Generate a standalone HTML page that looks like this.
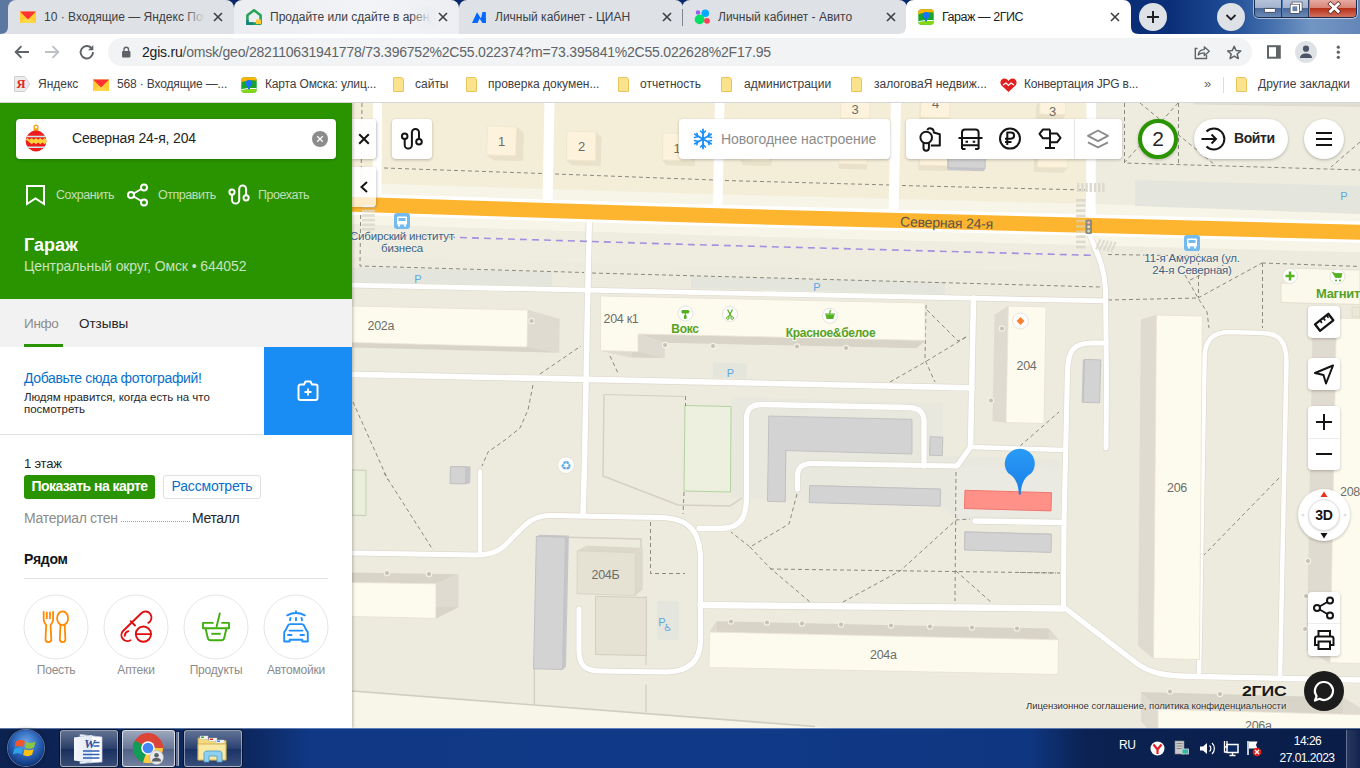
<!DOCTYPE html>
<html lang="ru">
<head>
<meta charset="utf-8">
<title>Гараж — 2ГИС</title>
<style>
*{box-sizing:border-box;margin:0;padding:0}
html,body{width:1360px;height:768px;overflow:hidden;background:#fff;font-family:"Liberation Sans",sans-serif;}
.abs{position:absolute}
#root{position:relative;width:1360px;height:768px;overflow:hidden}
/* ---------- chrome frame ---------- */
#frame{left:0;top:0;width:1360px;height:34px;background:linear-gradient(90deg,#5c78a0 0,#5c78a0 60px,#0a2766 230px,#08296c 900px,#0a2f78 1170px,#1d4b94 1225px,#3c68a8 1262px,#7296c4 1312px,#6586b8 1360px)}
.tab{top:0;height:34px;background:#dee1e6;border-radius:8px 8px 0 0;font-size:12px;color:#3c4043;white-space:nowrap;overflow:hidden}
.tab .t{position:absolute;left:36px;top:10px;width:164px;overflow:hidden;white-space:nowrap;line-height:15px}
.tab .x{position:absolute;right:8px;top:9px;width:16px;height:16px}
.tab .fav{position:absolute;left:12px;top:9px;width:16px;height:16px}
.tab.act{background:#fff}
.fade{position:absolute;top:6px;width:26px;height:22px}
#toolbar{left:0;top:34px;width:1360px;height:36px;background:#fff}
#omni{left:108px;top:38px;width:1144px;height:28px;border-radius:14px;background:#f1f3f4}
#url{left:142px;top:44px;font-size:14px;line-height:17px;color:#5f6368;white-space:nowrap;letter-spacing:-0.05px}
#url b{font-weight:normal;color:#202124}
#bm{left:0;top:70px;width:1360px;height:33px;border-bottom:1px solid #d4d6da;background:#fff;font-size:12px;color:#3c4043}
#bm span{position:absolute;top:7px;line-height:15px;white-space:nowrap}
.fold{position:absolute;top:7px;width:11px;height:15px;background:#fbe38e;border:1px solid #e9c557;border-radius:1px 3px 1px 1px}
/* ---------- left panel ---------- */
#panel{left:0;top:100px;width:352px;height:628px;background:#fff;box-shadow:1px 0 3px rgba(0,0,0,.25)}
#ghead{left:0;top:0;width:352px;height:199px;background:#299400}
#search{left:16px;top:19px;width:320px;height:40px;background:#fff;border-radius:4px;box-shadow:0 1px 3px rgba(0,0,0,.2)}
.act{color:rgba(255,255,255,.72);font-size:12.5px;line-height:16px;letter-spacing:-0.45px}
#tabs{left:0;top:199px;width:352px;height:48px;background:#f2f2f2}
.lbl{font-size:12px;line-height:14px;color:#8c8c8c;text-align:center;letter-spacing:-0.2px}
/* ---------- taskbar ---------- */
#task{left:0;top:728px;width:1360px;height:40px;background:linear-gradient(90deg,#0c2250 0,#0d2860 250px,#103884 310px,#103a88 700px,#0f3680 1030px,#0b2252 1085px,#0a1d48 1360px)}
.tbtn{position:absolute;top:2px;height:37px;border:1px solid rgba(255,255,255,.45);border-radius:3px;background:linear-gradient(180deg,rgba(255,255,255,.35),rgba(255,255,255,.12) 50%,rgba(255,255,255,.05) 51%,rgba(255,255,255,.18));box-shadow:0 0 0 1px rgba(0,0,0,.5)}
/* ---------- map ---------- */
#map{left:352px;top:100px;width:1008px;height:628px;background:#edebde;overflow:hidden}
.ctl{position:absolute;background:#fff;border-radius:4px;box-shadow:0 1px 3px rgba(0,0,0,.25)}
</style>
</head>
<body>
<div id="root">

<!-- ================= MAP ================= -->
<div id="map" class="abs">
<!--MAPSVG_START-->
<svg width="1008" height="628" viewBox="352 100 1008 628" style="position:absolute;left:0;top:0;font-family:'Liberation Sans',sans-serif">
<rect x="352" y="100" width="1008" height="628" fill="#edebde"/>
<polygon points="352.0,100.0 692.0,100.0 1090.0,100.0 1090.0,203.8 692.0,193.6 352.0,182.7" fill="#f4eed9"/>
<polygon points="352.0,182.7 692.0,193.6 1360.0,210.7 1360.0,224.7 692.0,207.6 352.0,196.7" fill="#f7f5e7"/>
<polygon points="1090.0,100.0 1360.0,100.0 1360.0,210.7 1090.0,203.8" fill="#eeecdf"/>
<polygon points="1135.0,180.0 1360.0,186.0 1360.0,214.0 1135.0,206.0" fill="#e4e5dc"/>
<polygon points="1192.0,100.0 1360.0,100.0 1360.0,107.0 1194.0,104.5" fill="#e0dcd0"/>
<polygon points="352.0,210.7 692.0,221.6 1360.0,238.7 1360.0,252.2 692.0,235.1 352.0,224.2" fill="#f7f5e7"/>
<polygon points="352.0,224.2 692.0,235.1 1090.0,245.3 1090.0,271.8 692.0,265.6 352.0,256.7" fill="#efeddf"/>
<polygon points="352.0,267.5 552.0,272.0 552.0,286.5 352.0,282.0" fill="#e4e5dc"/>
<polygon points="691.0,276.0 945.0,282.0 945.0,294.0 691.0,288.0" fill="#e4e5dc"/>
<polygon points="352.0,691.0 834.0,728.0 352.0,728.0" fill="#f8f6e8"/>
<polyline points="352.0,691.0 815.0,726.5" fill="none" stroke="#cfcdc0" stroke-width="1.6"/>
<polygon points="731.0,397.0 943.0,403.0 943.0,456.0 1059.0,459.0 1059.0,522.0 956.0,519.5 940.0,505.0 790.0,500.0 767.0,499.0 730.0,497.5" fill="#e9e8de"/>
<polygon points="956.0,466.0 1059.0,469.0 1059.0,518.0 956.0,515.0" fill="#ebeae2"/>
<polygon points="685.0,405.5 731.0,406.5 730.5,492.0 684.0,491.0" fill="#edf0df" stroke="#b3d39f" stroke-width="1"/>
<polygon points="352.0,470.0 366.0,470.3 366.0,515.6 352.0,515.3" fill="#eaeedb" stroke="#c3d0b2" stroke-width="1"/>
<polyline points="604.0,394.5 684.0,396.5" fill="none" stroke="#d3d0c2" stroke-width="1.2"/>
<polyline points="604.0,394.5 603.0,476.0 678.0,505.0 730.0,506.0 742.0,498.0" fill="none" stroke="#d3d0c2" stroke-width="1.4"/>
<polygon points="713.0,362.5 746.7,363.3 746.7,378.5 713.0,377.7" fill="#e4e5dc"/>
<polygon points="657.2,601.0 678.8,601.5 678.8,640.0 657.2,639.5" fill="#e4e5dc"/>
<polyline points="566.8,537.2 641.0,539.0 641.0,548.0" fill="none" stroke="#d3d0c2" stroke-width="1.4"/>
<polyline points="534.4,668.0 534.4,704.0" fill="none" stroke="#d3d0c2" stroke-width="1.4"/>
<polyline points="646.0,596.0 646.0,665.0" fill="none" stroke="#d3d0c2" stroke-width="1.2"/>
<polyline points="646.0,684.5 646.0,712.0" fill="none" stroke="#d3d0c2" stroke-width="1.4"/>
<polyline points="362.0,103.0 360.0,266.0 584.0,272.5" fill="none" stroke="#8b8a7f" stroke-width="1" stroke-dasharray="4 3"/>
<polyline points="384.0,168.0 543.0,173.5" fill="none" stroke="#8b8a7f" stroke-width="1" stroke-dasharray="4 3"/>
<polyline points="555.0,174.0 714.0,180.0" fill="none" stroke="#8b8a7f" stroke-width="1" stroke-dasharray="4 3"/>
<polyline points="725.0,180.5 890.0,185.0" fill="none" stroke="#8b8a7f" stroke-width="1" stroke-dasharray="4 3"/>
<polyline points="902.0,185.5 1085.0,190.0" fill="none" stroke="#8b8a7f" stroke-width="1" stroke-dasharray="4 3"/>
<polyline points="592.0,273.0 1100.0,287.0" fill="none" stroke="#8b8a7f" stroke-width="1" stroke-dasharray="4 3"/>
<polyline points="1108.0,254.5 1200.0,256.0" fill="none" stroke="#8b8a7f" stroke-width="1" stroke-dasharray="4 3"/>
<polyline points="1124.5,103.0 1124.5,163.0 1360.0,170.0" fill="none" stroke="#8b8a7f" stroke-width="1" stroke-dasharray="4 3"/>
<polyline points="1124.0,163.0 1178.0,103.0" fill="none" stroke="#8b8a7f" stroke-width="1" stroke-dasharray="4 3"/>
<polyline points="1140.0,103.0 1215.0,165.0" fill="none" stroke="#8b8a7f" stroke-width="1" stroke-dasharray="4 3"/>
<polyline points="1360.0,142.0 1331.0,167.0" fill="none" stroke="#8b8a7f" stroke-width="1" stroke-dasharray="4 3"/>
<polyline points="1178.5,103.0 1178.5,166.0" fill="none" stroke="#8b8a7f" stroke-width="1" stroke-dasharray="4 3"/>
<polyline points="1262.0,263.0 1360.0,266.5" fill="none" stroke="#8b8a7f" stroke-width="1" stroke-dasharray="4 3"/>
<polyline points="1262.5,263.0 1262.5,328.0" fill="none" stroke="#8b8a7f" stroke-width="1" stroke-dasharray="4 3"/>
<polyline points="1198.0,298.0 1262.0,263.0" fill="none" stroke="#8b8a7f" stroke-width="1" stroke-dasharray="4 3"/>
<polyline points="1198.5,240.0 1198.5,298.0" fill="none" stroke="#8b8a7f" stroke-width="1" stroke-dasharray="4 3"/>
<polyline points="1185.0,275.0 1198.0,298.0 1207.0,312.0 1209.0,328.0" fill="none" stroke="#8b8a7f" stroke-width="1" stroke-dasharray="4 3"/>
<polyline points="1108.0,300.0 1198.0,298.0" fill="none" stroke="#8b8a7f" stroke-width="1" stroke-dasharray="4 3"/>
<polyline points="1190.0,280.0 1230.0,262.0" fill="none" stroke="#8b8a7f" stroke-width="1" stroke-dasharray="4 3"/>
<polyline points="540.0,374.0 581.0,346.0" fill="none" stroke="#8b8a7f" stroke-width="1" stroke-dasharray="4 3"/>
<polyline points="610.0,356.0 618.0,373.0" fill="none" stroke="#8b8a7f" stroke-width="1" stroke-dasharray="4 3"/>
<polyline points="533.0,385.0 528.0,410.0 520.0,428.0 505.0,440.0 488.0,452.0 482.0,466.0" fill="none" stroke="#8b8a7f" stroke-width="1" stroke-dasharray="4 3"/>
<polyline points="353.0,402.0 388.0,480.0" fill="none" stroke="#8b8a7f" stroke-width="1" stroke-dasharray="4 3"/>
<polyline points="384.0,473.0 433.0,550.0" fill="none" stroke="#8b8a7f" stroke-width="1" stroke-dasharray="4 3"/>
<polyline points="926.0,305.0 925.0,360.0 935.0,382.0" fill="none" stroke="#8b8a7f" stroke-width="1" stroke-dasharray="4 3"/>
<polyline points="927.0,310.0 958.0,341.0 968.0,336.0" fill="none" stroke="#8b8a7f" stroke-width="1" stroke-dasharray="4 3"/>
<polyline points="890.0,382.0 925.0,362.0 968.0,336.0" fill="none" stroke="#8b8a7f" stroke-width="1" stroke-dasharray="4 3"/>
<polyline points="685.5,396.0 685.5,406.0" fill="none" stroke="#8b8a7f" stroke-width="1" stroke-dasharray="4 3"/>
<polyline points="684.0,492.0 683.0,514.0" fill="none" stroke="#8b8a7f" stroke-width="1" stroke-dasharray="4 3"/>
<polyline points="650.5,522.0 650.5,573.5 685.0,573.5" fill="none" stroke="#8b8a7f" stroke-width="1" stroke-dasharray="4 3"/>
<polyline points="797.0,494.0 789.0,524.0 750.0,547.0 731.0,532.0" fill="none" stroke="#8b8a7f" stroke-width="1" stroke-dasharray="4 3"/>
<polyline points="750.0,547.0 770.0,568.0 810.0,602.0" fill="none" stroke="#8b8a7f" stroke-width="1" stroke-dasharray="4 3"/>
<polyline points="770.0,569.0 1060.0,573.0" fill="none" stroke="#8b8a7f" stroke-width="1" stroke-dasharray="4 3"/>
<polyline points="956.0,472.0 955.0,601.0" fill="none" stroke="#8b8a7f" stroke-width="1" stroke-dasharray="4 3"/>
<polyline points="843.0,602.0 900.0,571.0 956.0,520.0 970.0,519.0" fill="none" stroke="#8b8a7f" stroke-width="1" stroke-dasharray="4 3"/>
<polyline points="956.0,571.0 992.0,603.0" fill="none" stroke="#8b8a7f" stroke-width="1" stroke-dasharray="4 3"/>
<polyline points="1020.0,446.0 1059.0,412.0" fill="none" stroke="#8b8a7f" stroke-width="1" stroke-dasharray="4 3"/>
<polyline points="1203.0,556.0 1280.0,477.0" fill="none" stroke="#8b8a7f" stroke-width="1" stroke-dasharray="4 3"/>
<polyline points="1020.0,572.5 1056.0,573.0" fill="none" stroke="#8b8a7f" stroke-width="1" stroke-dasharray="4 3"/>
<path d="M352 285.2 L692 292.3 L1105 300.9" fill="none" stroke="#dcdacd" stroke-width="6.1" stroke-linecap="round" stroke-linejoin="round"/>
<path d="M352 374.3 L972 387.8" fill="none" stroke="#dcdacd" stroke-width="7.0" stroke-linecap="round" stroke-linejoin="round"/>
<path d="M589.5 208 L587.8 291 L584.3 470 L583 513" fill="none" stroke="#dcdacd" stroke-width="6.8999999999999995" stroke-linecap="round" stroke-linejoin="round"/>
<path d="M973.5 298 L970.5 447" fill="none" stroke="#dcdacd" stroke-width="6.8999999999999995" stroke-linecap="round" stroke-linejoin="round"/>
<path d="M1088 228 C1091 245 1104 258 1105.5 290 L1106.5 380 L1106 448" fill="none" stroke="#dcdacd" stroke-width="6.3" stroke-linecap="round" stroke-linejoin="round"/>
<path d="M1106 343 L1092 343 C1072 343 1068 352 1067.5 372 L1064 520 L1063.5 607" fill="none" stroke="#dcdacd" stroke-width="6.5" stroke-linecap="round" stroke-linejoin="round"/>
<path d="M970.500 447 L1064 450" fill="none" stroke="#dcdacd" stroke-width="5.8999999999999995" stroke-linecap="round" stroke-linejoin="round"/>
<path d="M970.500 447 L957 466 L812 463.500 C802 463.500 797.500 468 797.500 476 L797.500 489" fill="none" stroke="#dcdacd" stroke-width="6.5" stroke-linecap="round" stroke-linejoin="round"/>
<path d="M924 466 L924 422 C924 412 919 408 909 407.500 L762 404.500 C751 404.500 746.500 409 746.500 419 L746.500 497 C746.500 515 742 528 722 528.500 L699 528.500" fill="none" stroke="#dcdacd" stroke-width="6.6" stroke-linecap="round" stroke-linejoin="round"/>
<path d="M352 553 L476 555 C500 555 505 545 517 533 C527 523 533 515.500 552 515.500 L660 517.500 C690 518 700.500 532 700.500 560 L700.500 640 C700.500 660 690 672 665 672 L600 671 C584 671 579 664 579 650 L579 609" fill="none" stroke="#dcdacd" stroke-width="6.3999999999999995" stroke-linecap="round" stroke-linejoin="round"/>
<path d="M480 471 L480 554" fill="none" stroke="#dcdacd" stroke-width="5.5" stroke-linecap="round" stroke-linejoin="round"/>
<path d="M700.500 605 L1063.500 608.500" fill="none" stroke="#dcdacd" stroke-width="7.7" stroke-linecap="round" stroke-linejoin="round"/>
<path d="M1063.500 607 L1135 662 C1150 674 1165 676 1197 676.500 L1360 680" fill="none" stroke="#dcdacd" stroke-width="6.6" stroke-linecap="round" stroke-linejoin="round"/>
<path d="M975 521 L1062 522.500" fill="none" stroke="#dcdacd" stroke-width="6.8" stroke-linecap="round" stroke-linejoin="round"/>
<path d="M1199 676 L1204.500 360 C1204.500 340 1212 332 1230 332 L1262 333 C1280 333.500 1286.500 342 1286.500 362 L1280 676" fill="none" stroke="#dcdacd" stroke-width="5.8999999999999995" stroke-linecap="round" stroke-linejoin="round"/>
<path d="M352 285.2 L692 292.3 L1105 300.9" fill="none" stroke="#ffffff" stroke-width="4.8" stroke-linecap="round" stroke-linejoin="round"/>
<path d="M352 374.3 L972 387.8" fill="none" stroke="#ffffff" stroke-width="5.7" stroke-linecap="round" stroke-linejoin="round"/>
<path d="M589.5 208 L587.8 291 L584.3 470 L583 513" fill="none" stroke="#ffffff" stroke-width="5.6" stroke-linecap="round" stroke-linejoin="round"/>
<path d="M973.5 298 L970.5 447" fill="none" stroke="#ffffff" stroke-width="5.6" stroke-linecap="round" stroke-linejoin="round"/>
<path d="M1088 228 C1091 245 1104 258 1105.5 290 L1106.5 380 L1106 448" fill="none" stroke="#ffffff" stroke-width="5" stroke-linecap="round" stroke-linejoin="round"/>
<path d="M1106 343 L1092 343 C1072 343 1068 352 1067.5 372 L1064 520 L1063.5 607" fill="none" stroke="#ffffff" stroke-width="5.2" stroke-linecap="round" stroke-linejoin="round"/>
<path d="M970.500 447 L1064 450" fill="none" stroke="#ffffff" stroke-width="4.6" stroke-linecap="round" stroke-linejoin="round"/>
<path d="M970.500 447 L957 466 L812 463.500 C802 463.500 797.500 468 797.500 476 L797.500 489" fill="none" stroke="#ffffff" stroke-width="5.2" stroke-linecap="round" stroke-linejoin="round"/>
<path d="M924 466 L924 422 C924 412 919 408 909 407.500 L762 404.500 C751 404.500 746.500 409 746.500 419 L746.500 497 C746.500 515 742 528 722 528.500 L699 528.500" fill="none" stroke="#ffffff" stroke-width="5.3" stroke-linecap="round" stroke-linejoin="round"/>
<path d="M352 553 L476 555 C500 555 505 545 517 533 C527 523 533 515.500 552 515.500 L660 517.500 C690 518 700.500 532 700.500 560 L700.500 640 C700.500 660 690 672 665 672 L600 671 C584 671 579 664 579 650 L579 609" fill="none" stroke="#ffffff" stroke-width="5.1" stroke-linecap="round" stroke-linejoin="round"/>
<path d="M480 471 L480 554" fill="none" stroke="#ffffff" stroke-width="4.2" stroke-linecap="round" stroke-linejoin="round"/>
<path d="M700.500 605 L1063.500 608.500" fill="none" stroke="#ffffff" stroke-width="6.4" stroke-linecap="round" stroke-linejoin="round"/>
<path d="M1063.500 607 L1135 662 C1150 674 1165 676 1197 676.500 L1360 680" fill="none" stroke="#ffffff" stroke-width="5.3" stroke-linecap="round" stroke-linejoin="round"/>
<path d="M975 521 L1062 522.500" fill="none" stroke="#ffffff" stroke-width="5.5" stroke-linecap="round" stroke-linejoin="round"/>
<path d="M1199 676 L1204.500 360 C1204.500 340 1212 332 1230 332 L1262 333 C1280 333.500 1286.500 342 1286.500 362 L1280 676" fill="none" stroke="#ffffff" stroke-width="4.6" stroke-linecap="round" stroke-linejoin="round"/>
<polygon points="352.0,193.2 692.0,204.1 1360.0,221.2 1360.0,242.7 692.0,225.6 352.0,214.7" fill="#ffffff"/>
<polyline points="352.0,234.2 692.0,244.6 1095.0,255.4" fill="none" stroke="#a48fe0" stroke-width="1.6" stroke-dasharray="7 5"/>
<polygon points="373.0,100.0 382.0,100.0 381.5,197.4 372.5,197.4" fill="#ffffff"/>
<polygon points="544.5,100.0 554.5,100.0 552.5,202.8 542.5,202.8" fill="#ffffff"/>
<polygon points="715.0,100.0 724.5,100.0 722.5,208.1 713.0,208.1" fill="#ffffff"/>
<polygon points="891.0,100.0 901.0,100.0 898.5,212.6 888.5,212.6" fill="#ffffff"/>
<polygon points="1086.5,100.0 1096.0,100.0 1095.5,217.9 1086.0,217.7" fill="#ffffff"/>
<polygon points="352.0,196.7 692.0,207.6 1360.0,224.7 1360.0,239.7 692.0,222.6 352.0,211.7" fill="#fdb52f"/>
<rect x="1077.0" y="183" width="2.4" height="9" fill="#dcdad0"/>
<rect x="1081.2" y="183" width="2.4" height="9" fill="#dcdad0"/>
<rect x="1085.4" y="183" width="2.4" height="9" fill="#dcdad0"/>
<rect x="1089.6" y="183" width="2.4" height="9" fill="#dcdad0"/>
<rect x="1093.8" y="183" width="2.4" height="9" fill="#dcdad0"/>
<rect x="1098.0" y="183" width="2.4" height="9" fill="#dcdad0"/>
<rect x="1102.2" y="183" width="2.4" height="9" fill="#dcdad0"/>
<rect x="1076" y="199.0" width="9.500" height="2.600" fill="#d9d7cc" opacity="0.9"/>
<rect x="1076" y="204.2" width="9.500" height="2.600" fill="#d9d7cc" opacity="0.9"/>
<rect x="1076" y="209.4" width="9.500" height="2.600" fill="#d9d7cc" opacity="0.9"/>
<rect x="1076" y="214.6" width="9.500" height="2.600" fill="#d9d7cc" opacity="0.9"/>
<rect x="1076" y="219.8" width="9.500" height="2.600" fill="#d9d7cc" opacity="0.55"/>
<rect x="1076" y="225.0" width="9.500" height="2.600" fill="#d9d7cc" opacity="0.55"/>
<rect x="1076" y="230.2" width="9.500" height="2.600" fill="#d9d7cc" opacity="0.55"/>
<rect x="1076" y="235.4" width="9.500" height="2.600" fill="#d9d7cc" opacity="0.9"/>
<rect x="1076" y="240.6" width="9.500" height="2.600" fill="#d9d7cc" opacity="0.9"/>
<rect x="1076" y="245.8" width="9.500" height="2.600" fill="#d9d7cc" opacity="0.9"/>
<rect x="362" y="205.0" width="13" height="2.600" fill="#d9d7cc" opacity="0.8"/>
<rect x="362" y="209.6" width="13" height="2.600" fill="#d9d7cc" opacity="0.8"/>
<rect x="362" y="214.2" width="13" height="2.600" fill="#d9d7cc" opacity="0.8"/>
<rect x="362" y="218.8" width="13" height="2.600" fill="#d9d7cc" opacity="0.8"/>
<rect x="362" y="223.4" width="13" height="2.600" fill="#d9d7cc" opacity="0.8"/>
<rect x="362" y="228.0" width="13" height="2.600" fill="#d9d7cc" opacity="0.8"/>
<path d="M1096.0 249.5l4.500-10" stroke="#d9d7cc" stroke-width="2" opacity=".8"/>
<path d="M1099.8 250.1l4.500-10" stroke="#d9d7cc" stroke-width="2" opacity=".8"/>
<path d="M1103.6 250.7l4.500-10" stroke="#d9d7cc" stroke-width="2" opacity=".8"/>
<path d="M1107.4 251.3l4.500-10" stroke="#d9d7cc" stroke-width="2" opacity=".8"/>
<path d="M1111.2 251.9l4.500-10" stroke="#d9d7cc" stroke-width="2" opacity=".8"/>
<polygon points="495.4,132.0 523.8,132.8 516.5,126.8 487.5,126.0" fill="#e9e1c9"/>
<polygon points="523.8,132.8 523.0,161.2 515.7,155.8 516.5,126.8" fill="#e9e1c9"/>
<polygon points="523.0,161.2 494.6,160.4 486.7,155.0 515.7,155.8" fill="#e9e1c9"/>
<polygon points="494.6,160.4 495.4,132.0 487.5,126.0 486.7,155.0" fill="#e9e1c9"/>
<polygon points="487.5,126.0 516.5,126.8 515.7,155.8 486.7,155.0" fill="#fdf3dc" stroke="#efe6cc" stroke-width="0.8"/>
<polygon points="573.2,136.9 601.6,137.7 596.0,131.8 567.0,131.0" fill="#e9e1c9"/>
<polygon points="601.6,137.7 600.8,166.1 595.2,160.8 596.0,131.8" fill="#e9e1c9"/>
<polygon points="600.8,166.1 572.4,165.3 566.2,160.0 595.2,160.8" fill="#e9e1c9"/>
<polygon points="572.4,165.3 573.2,136.9 567.0,131.0 566.2,160.0" fill="#e9e1c9"/>
<polygon points="567.0,131.0 596.0,131.8 595.2,160.8 566.2,160.0" fill="#fdf3dc" stroke="#efe6cc" stroke-width="0.8"/>
<polygon points="667.2,138.9 695.5,139.6 692.0,133.8 663.0,133.0" fill="#e9e1c9"/>
<polygon points="695.5,139.6 694.8,166.1 691.2,160.8 692.0,133.8" fill="#e9e1c9"/>
<polygon points="694.8,166.1 666.4,165.3 662.2,160.0 691.2,160.8" fill="#e9e1c9"/>
<polygon points="666.4,165.3 667.2,138.9 663.0,133.0 662.2,160.0" fill="#e9e1c9"/>
<polygon points="663.0,133.0 692.0,133.8 691.2,160.8 662.2,160.0" fill="#fdf3dc" stroke="#efe6cc" stroke-width="0.8"/>
<polygon points="841.3,106.6 869.7,107.4 870.0,100.8 841.0,100.0" fill="#e9e1c9"/>
<polygon points="869.7,107.4 869.2,125.0 869.5,118.8 870.0,100.8" fill="#e9e1c9"/>
<polygon points="869.2,125.0 840.8,124.2 840.5,118.0 869.5,118.8" fill="#e9e1c9"/>
<polygon points="840.8,124.2 841.3,106.6 841.0,100.0 840.5,118.0" fill="#e9e1c9"/>
<polygon points="841.0,100.0 870.0,100.8 869.5,118.8 840.5,118.0" fill="#fdf3dc" stroke="#efe6cc" stroke-width="0.8"/>
<polygon points="919.6,106.6 948.0,107.4 950.0,100.8 921.0,100.0" fill="#e9e1c9"/>
<polygon points="948.0,107.4 947.5,124.0 949.5,117.8 950.0,100.8" fill="#e9e1c9"/>
<polygon points="947.5,124.0 919.1,123.2 920.5,117.0 949.5,117.8" fill="#e9e1c9"/>
<polygon points="919.1,123.2 919.6,106.6 921.0,100.0 920.5,117.0" fill="#e9e1c9"/>
<polygon points="921.0,100.0 950.0,100.8 949.5,117.8 920.5,117.0" fill="#fdf3dc" stroke="#efe6cc" stroke-width="0.8"/>
<polygon points="743.5,155.5 771.8,156.3 770.0,150.8 741.0,150.0" fill="#e9e1c9"/>
<polygon points="771.8,156.3 771.6,166.1 769.7,160.8 770.0,150.8" fill="#e9e1c9"/>
<polygon points="771.6,166.1 743.2,165.3 740.7,160.0 769.7,160.8" fill="#e9e1c9"/>
<polygon points="743.2,165.3 743.5,155.5 741.0,150.0 740.7,160.0" fill="#e9e1c9"/>
<polygon points="741.0,150.0 770.0,150.8 769.7,160.8 740.7,160.0" fill="#fdf3dc" stroke="#efe6cc" stroke-width="0.8"/>
<polygon points="839.4,155.5 867.2,156.3 867.5,150.8 839.0,150.0" fill="#e9e1c9"/>
<polygon points="867.2,156.3 866.9,169.5 867.1,164.3 867.5,150.8" fill="#e9e1c9"/>
<polygon points="866.9,169.5 839.0,168.7 838.6,163.5 867.1,164.3" fill="#e9e1c9"/>
<polygon points="839.0,168.7 839.4,155.5 839.0,150.0 838.6,163.5" fill="#e9e1c9"/>
<polygon points="839.0,150.0 867.5,150.8 867.1,164.3 838.6,163.5" fill="#fdf3dc" stroke="#efe6cc" stroke-width="0.8"/>
<polygon points="918.6,155.5 946.5,156.3 948.5,150.8 920.0,150.0" fill="#e9e1c9"/>
<polygon points="946.5,156.3 946.1,170.9 948.1,165.8 948.5,150.8" fill="#e9e1c9"/>
<polygon points="946.1,170.9 918.2,170.2 919.6,165.0 948.1,165.8" fill="#e9e1c9"/>
<polygon points="918.2,170.2 918.6,155.5 920.0,150.0 919.6,165.0" fill="#e9e1c9"/>
<polygon points="920.0,150.0 948.5,150.8 948.1,165.8 919.6,165.0" fill="#fdf3dc" stroke="#efe6cc" stroke-width="0.8"/>
<polygon points="1036.0,106.6 1061.5,107.3 1066.0,100.7 1040.0,100.0" fill="#e9e1c9"/>
<polygon points="1061.5,107.3 1061.1,121.0 1065.6,114.7 1066.0,100.7" fill="#e9e1c9"/>
<polygon points="1061.1,121.0 1035.7,120.3 1039.6,114.0 1065.6,114.7" fill="#e9e1c9"/>
<polygon points="1035.7,120.3 1036.0,106.6 1040.0,100.0 1039.6,114.0" fill="#e9e1c9"/>
<polygon points="1040.0,100.0 1066.0,100.7 1065.6,114.7 1039.6,114.0" fill="#fdf3dc" stroke="#efe6cc" stroke-width="0.8"/>
<polygon points="1034.1,155.5 1063.4,156.3 1068.0,150.8 1038.0,150.0" fill="#e9e1c9"/>
<polygon points="1063.4,156.3 1063.0,172.9 1067.5,167.8 1068.0,150.8" fill="#e9e1c9"/>
<polygon points="1063.0,172.9 1033.6,172.1 1037.5,167.0 1067.5,167.8" fill="#e9e1c9"/>
<polygon points="1033.6,172.1 1034.1,155.5 1038.0,150.0 1037.5,167.0" fill="#e9e1c9"/>
<polygon points="1038.0,150.0 1068.0,150.8 1067.5,167.8 1037.5,167.0" fill="#fdf3dc" stroke="#efe6cc" stroke-width="0.8"/>
<polygon points="947.4,155.0 984.0,156.0 985.5,153.0 948.5,152.0" fill="#c6c6c9"/>
<polygon points="984.0,156.0 983.5,171.3 985.1,168.5 985.5,153.0" fill="#c6c6c9"/>
<polygon points="983.5,171.3 947.0,170.3 948.1,167.5 985.1,168.5" fill="#c6c6c9"/>
<polygon points="947.0,170.3 947.4,155.0 948.5,152.0 948.1,167.5" fill="#c6c6c9"/>
<polygon points="948.5,152.0 985.5,153.0 985.1,168.5 948.1,167.5" fill="#d3d3d3" stroke="#bdbdc0" stroke-width="0.8"/>
<polygon points="769.5,415.9 911.6,419.2 912.0,419.3 768.8,416.0" fill="#c6c6c9"/>
<polygon points="911.6,419.2 911.6,453.6 912.0,454.0 912.0,419.3" fill="#c6c6c9"/>
<polygon points="911.6,453.6 786.3,450.2 785.7,450.6 912.0,454.0" fill="#c6c6c9"/>
<polygon points="786.3,450.2 785.8,501.0 785.2,501.8 785.7,450.6" fill="#c6c6c9"/>
<polygon points="785.8,501.0 768.2,500.5 767.5,501.3 785.2,501.8" fill="#c6c6c9"/>
<polygon points="768.2,500.5 769.5,415.9 768.8,416.0 767.5,501.3" fill="#c6c6c9"/>
<polygon points="768.8,416.0 912.0,419.3 912.0,454.0 785.7,450.6 785.2,501.8 767.5,501.3" fill="#d3d3d3" stroke="#bdbdc0" stroke-width="0.8"/>
<polygon points="810.1,485.0 940.0,488.6 940.6,489.2 809.7,485.6" fill="#c6c6c9"/>
<polygon points="940.0,488.6 939.5,505.4 940.2,506.2 940.6,489.2" fill="#c6c6c9"/>
<polygon points="939.5,505.4 809.6,501.8 809.2,502.6 940.2,506.2" fill="#c6c6c9"/>
<polygon points="809.6,501.8 810.1,485.0 809.7,485.6 809.2,502.6" fill="#c6c6c9"/>
<polygon points="809.7,485.6 940.6,489.2 940.2,506.2 809.2,502.6" fill="#d3d3d3" stroke="#bdbdc0" stroke-width="0.8"/>
<polygon points="929.7,436.5 942.1,436.9 942.8,437.1 930.3,436.8" fill="#c6c6c9"/>
<polygon points="942.1,436.9 941.6,455.2 942.3,455.6 942.8,437.1" fill="#c6c6c9"/>
<polygon points="941.6,455.2 929.2,454.9 929.8,455.3 942.3,455.6" fill="#c6c6c9"/>
<polygon points="929.2,454.9 929.7,436.5 930.3,436.8 929.8,455.3" fill="#c6c6c9"/>
<polygon points="930.3,436.8 942.8,437.1 942.3,455.6 929.8,455.3" fill="#d3d3d3" stroke="#bdbdc0" stroke-width="0.8"/>
<polygon points="964.3,531.2 1050.3,533.6 1051.5,534.4 965.0,532.0" fill="#c6c6c9"/>
<polygon points="1050.3,533.6 1049.8,551.5 1051.0,552.4 1051.5,534.4" fill="#c6c6c9"/>
<polygon points="1049.8,551.5 963.9,549.1 964.5,550.0 1051.0,552.4" fill="#c6c6c9"/>
<polygon points="963.9,549.1 964.3,531.2 965.0,532.0 964.5,550.0" fill="#c6c6c9"/>
<polygon points="965.0,532.0 1051.5,534.4 1051.0,552.4 964.5,550.0" fill="#d3d3d3" stroke="#bdbdc0" stroke-width="0.8"/>
<polygon points="540.2,534.8 568.9,535.6 565.5,537.2 536.4,536.4" fill="#c6c6c9"/>
<polygon points="568.9,535.6 566.0,666.4 562.5,669.5 565.5,537.2" fill="#c6c6c9"/>
<polygon points="566.0,666.4 537.3,665.7 533.5,668.8 562.5,669.5" fill="#c6c6c9"/>
<polygon points="537.3,665.7 540.2,534.8 536.4,536.4 533.5,668.8" fill="#c6c6c9"/>
<polygon points="536.4,536.4 565.5,537.2 562.5,669.5 533.5,668.8" fill="#d3d3d3" stroke="#bdbdc0" stroke-width="0.8"/>
<polygon points="455.3,465.9 470.6,466.3 466.0,467.0 450.5,466.6" fill="#c6c6c9"/>
<polygon points="470.6,466.3 470.2,483.1 465.5,484.0 466.0,467.0" fill="#c6c6c9"/>
<polygon points="470.2,483.1 454.8,482.7 450.0,483.6 465.5,484.0" fill="#c6c6c9"/>
<polygon points="454.8,482.7 455.3,465.9 450.5,466.6 450.0,483.6" fill="#c6c6c9"/>
<polygon points="450.5,466.6 466.0,467.0 465.5,484.0 450.0,483.6" fill="#d3d3d3" stroke="#bdbdc0" stroke-width="0.8"/>
<polygon points="1082.8,359.8 1098.9,360.2 1100.8,359.9 1084.6,359.4" fill="#c6c6c9"/>
<polygon points="1098.9,360.2 1097.7,402.9 1099.6,402.8 1100.8,359.9" fill="#c6c6c9"/>
<polygon points="1097.7,402.9 1081.6,402.4 1083.4,402.4 1099.6,402.8" fill="#c6c6c9"/>
<polygon points="1081.6,402.4 1082.8,359.8 1084.6,359.4 1083.4,402.4" fill="#c6c6c9"/>
<polygon points="1084.6,359.4 1100.8,359.9 1099.6,402.8 1083.4,402.4" fill="#d3d3d3" stroke="#bdbdc0" stroke-width="0.8"/>
<polygon points="965.0,490.3 1051.5,492.7 1051.0,510.9 964.5,508.5" fill="#ff9188" stroke="#f0766c" stroke-width="1"/>
<polygon points="586.7,545.8 642.8,547.8 635.3,552.8 577.3,550.7" fill="#dcd8c9"/>
<polygon points="642.8,547.8 642.8,589.1 635.3,595.5 635.3,552.8" fill="#dedacb"/>
<polygon points="642.8,589.1 586.4,587.3 577.0,593.7 635.3,595.5" fill="#dcd8c9"/>
<polygon points="586.4,587.3 586.7,545.8 577.3,550.7 577.0,593.7" fill="#dedacb"/>
<polygon points="577.3,550.7 635.3,552.8 635.3,595.5 577.0,593.7" fill="#e5e2d4" stroke="#d6d2c3" stroke-width="0.8"/>
<polygon points="595.5,596.3 646.3,597.5 646.3,655.5 595.5,654.5" fill="#e5e2d4" stroke="#d2cec0" stroke-width="1"/>
<polygon points="354.2,314.6 559.8,319.3 527.8,310.0 300.0,304.8" fill="#d9d4c8"/>
<polygon points="559.8,319.3 559.1,352.7 527.0,347.0 527.8,310.0" fill="#e0dbd0"/>
<polygon points="559.1,352.7 354.2,347.4 300.0,341.2 527.0,347.0" fill="#d9d4c8"/>
<polygon points="354.2,347.4 354.2,314.6 300.0,304.8 300.0,341.2" fill="#e0dbd0"/>
<polygon points="300.0,304.8 527.8,310.0 527.0,347.0 300.0,341.2" fill="#fdfbee" stroke="#e8e3d3" stroke-width="0.8"/>
<polygon points="330.0,572.2 458.6,574.2 435.9,583.8 300.0,581.7" fill="#d9d4c8"/>
<polygon points="458.6,574.2 458.6,606.9 435.9,618.4 435.9,583.8" fill="#e0dbd0"/>
<polygon points="458.6,606.9 330.0,603.9 300.0,615.2 435.9,618.4" fill="#d9d4c8"/>
<polygon points="330.0,603.9 330.0,572.2 300.0,581.7 300.0,615.2" fill="#e0dbd0"/>
<polygon points="300.0,581.7 435.9,583.8 435.9,618.4 300.0,615.2" fill="#fdfbee" stroke="#e8e3d3" stroke-width="0.8"/>
<polygon points="632.1,309.4 916.5,315.5 925.0,303.0 600.7,296.0" fill="#d9d4c8"/>
<polygon points="916.5,315.5 916.5,348.3 925.0,340.4 925.0,303.0" fill="#e0dbd0"/>
<polygon points="916.5,348.3 664.8,342.7 638.0,334.0 925.0,340.4" fill="#d9d4c8"/>
<polygon points="664.8,342.7 664.8,358.1 638.0,351.5 638.0,334.0" fill="#e0dbd0"/>
<polygon points="664.8,358.1 631.9,357.4 600.5,350.7 638.0,351.5" fill="#d9d4c8"/>
<polygon points="631.9,357.4 632.1,309.4 600.7,296.0 600.5,350.7" fill="#e0dbd0"/>
<polygon points="600.7,296.0 925.0,303.0 925.0,340.4 638.0,334.0 638.0,351.5 600.5,350.7" fill="#fdfbee" stroke="#e8e3d3" stroke-width="0.8"/>
<polygon points="994.5,315.0 1028.7,315.9 1046.0,307.0 1008.4,306.0" fill="#d9d4c8"/>
<polygon points="1028.7,315.9 1026.9,421.8 1044.0,423.5 1046.0,307.0" fill="#e0dbd0"/>
<polygon points="1026.9,421.8 992.4,420.9 1006.0,422.5 1044.0,423.5" fill="#d9d4c8"/>
<polygon points="992.4,420.9 994.5,315.0 1008.4,306.0 1006.0,422.5" fill="#e0dbd0"/>
<polygon points="1008.4,306.0 1046.0,307.0 1044.0,423.5 1006.0,422.5" fill="#fdfbee" stroke="#e8e3d3" stroke-width="0.8"/>
<polygon points="716.7,621.2 1048.9,628.6 1058.5,639.8 709.7,632.0" fill="#d9d4c8"/>
<polygon points="1048.9,628.6 1048.4,661.7 1058.0,674.5 1058.5,639.8" fill="#e0dbd0"/>
<polygon points="1048.4,661.7 716.0,655.0 709.0,667.5 1058.0,674.5" fill="#d9d4c8"/>
<polygon points="716.0,655.0 716.7,621.2 709.7,632.0 709.0,667.5" fill="#e0dbd0"/>
<polygon points="709.7,632.0 1058.5,639.8 1058.0,674.5 709.0,667.5" fill="#fdfbee" stroke="#e8e3d3" stroke-width="0.8"/>
<polygon points="1140.8,319.7 1184.2,320.6 1202.3,316.0 1156.5,315.0" fill="#d9d4c8"/>
<polygon points="1184.2,320.6 1181.6,646.2 1199.5,659.5 1202.3,316.0" fill="#e0dbd0"/>
<polygon points="1181.6,646.2 1138.0,645.3 1153.5,658.5 1199.5,659.5" fill="#d9d4c8"/>
<polygon points="1138.0,645.3 1140.8,319.7 1156.5,315.0 1153.5,658.5" fill="#e0dbd0"/>
<polygon points="1156.5,315.0 1202.3,316.0 1199.5,659.5 1153.5,658.5" fill="#fdfbee" stroke="#e8e3d3" stroke-width="0.8"/>
<polygon points="1312.7,322.3 1346.5,323.3 1372.0,319.0 1336.4,318.0" fill="#d9d4c8"/>
<polygon points="1346.5,323.3 1346.5,651.2 1372.0,664.0 1372.0,319.0" fill="#e0dbd0"/>
<polygon points="1346.5,651.2 1306.6,650.0 1330.0,662.7 1372.0,664.0" fill="#d9d4c8"/>
<polygon points="1306.6,650.0 1312.7,322.3 1336.4,318.0 1330.0,662.7" fill="#e0dbd0"/>
<polygon points="1336.4,318.0 1372.0,319.0 1372.0,664.0 1330.0,662.7" fill="#fdfbee" stroke="#e8e3d3" stroke-width="0.8"/>
<polygon points="1140.9,692.1 1342.8,697.5 1372.0,715.0 1158.0,709.3" fill="#d9d4c8"/>
<polygon points="1342.8,697.5 1342.8,721.0 1372.0,740.0 1372.0,715.0" fill="#e0dbd0"/>
<polygon points="1342.8,721.0 1140.9,721.0 1158.0,740.0 1372.0,740.0" fill="#d9d4c8"/>
<polygon points="1140.9,721.0 1140.9,692.1 1158.0,709.3 1158.0,740.0" fill="#e0dbd0"/>
<polygon points="1158.0,709.3 1372.0,715.0 1372.0,740.0 1158.0,740.0" fill="#fdfbee" stroke="#e8e3d3" stroke-width="0.8"/>
<polygon points="1290.0,268.0 1360.0,270.0 1360.0,304.5 1281.0,302.5 1281.0,283.0 1290.0,283.0" fill="#fbf9ec" stroke="#e4e0cf" stroke-width="1"/>
<polygon points="1352.0,307.0 1360.0,307.2 1360.0,317.0 1352.0,316.8" fill="#ebe8d8" stroke="#dcd8c8" stroke-width="0.8"/>
<!-- labels -->
<g font-size="13" fill="#6b6b66" text-anchor="middle">
<text x="501.500" y="145.500">1</text><text x="581.500" y="150.500">2</text><text x="677" y="152.500">1</text>
<text x="855" y="113.500">3</text><text x="935.500" y="108">4</text><text x="1052.500" y="116">3</text>
</g>
<g font-size="12.500" fill="#6e6e69" letter-spacing="-0.3">
<text x="367.500" y="330">202а</text>
<text x="603.500" y="322.500">204 к1</text>
<text x="1016.500" y="370">204</text>
<text x="591.500" y="578.500">204Б</text>
<text x="870" y="658.500">204а</text>
<text x="1167" y="491.500">206</text>
<text x="1340" y="496">208</text>
<text x="1245" y="730">206а</text>
</g>
<text x="900" y="226.500" font-size="14" fill="#5f5645" transform="rotate(1.500 900 226.500)" stroke="#fdb52f" stroke-width="0" letter-spacing="-0.2">Северная 24-я</text>
<!-- P signs -->
<g font-size="11" fill="#5ba8e6" text-anchor="middle">
<text x="418" y="283">P</text><text x="817" y="291">P</text><text x="730.500" y="377">P</text><text x="1344" y="199.500">P</text>
<text x="661.800" y="626" font-size="11">P</text>
</g>
<text x="667.800" y="630.500" font-family="DejaVu Sans,sans-serif" font-size="10" fill="#5ba8e6" text-anchor="middle">♿</text>
<!-- bus stops -->
<g>
<rect x="394" y="213" width="16" height="16" rx="3" fill="#73bbef"/><path d="M398 216.500h8a1 1 0 0 1 1 1v7h-10v-7a1 1 0 0 1 1-1Z" fill="#fff"/><rect x="398.500" y="218" width="7" height="3" fill="#73bbef"/><rect x="398" y="224.500" width="2" height="2" fill="#fff"/><rect x="404" y="224.500" width="2" height="2" fill="#fff"/>
<rect x="1184" y="235" width="16" height="16" rx="3" fill="#73bbef"/><path d="M1188 238.500h8a1 1 0 0 1 1 1v7h-10v-7a1 1 0 0 1 1-1Z" fill="#fff"/><rect x="1188.500" y="240" width="7" height="3" fill="#73bbef"/><rect x="1188" y="246.500" width="2" height="2" fill="#fff"/><rect x="1194" y="246.500" width="2" height="2" fill="#fff"/>
</g>
<g font-size="11.500" fill="#3f6286" text-anchor="middle" letter-spacing="-0.2" stroke="#f2f0e2" stroke-width="2.200" paint-order="stroke" stroke-linejoin="round">
<text x="402" y="239.500">Сибирский институт</text><text x="402" y="252">бизнеса</text>
<text x="1192" y="261.500">11-я Амурская (ул.</text><text x="1192" y="274">24-я Северная)</text>
</g>
<!-- traffic light -->
<rect x="1085.500" y="219.500" width="6.500" height="14.500" rx="1.500" fill="#8a8a84"/><circle cx="1088.700" cy="222.500" r="1.500" fill="#f3b0a8"/><circle cx="1088.700" cy="226.700" r="1.500" fill="#f6dca0"/><circle cx="1088.700" cy="231" r="1.500" fill="#c4e0b0"/>
<!-- poi icons -->
<g>
<circle cx="685.500" cy="313.500" r="7.500" fill="#fff" stroke="#e4e4dc" stroke-width="1"/><path d="M682 310.500h6.500v2.500H682zM689.500 311.700h-1M685.300 313v2.500M684.500 315.500h1.600v3h-1.600z" fill="#54b11f" stroke="#54b11f" stroke-width="1"/>
<circle cx="730" cy="314" r="7.500" fill="#fff" stroke="#e4e4dc" stroke-width="1"/><path d="M727.500 309.500l4 7.500M732.500 309.500l-4 7.500" stroke="#54b11f" stroke-width="1.300"/><circle cx="727.800" cy="318" r="1.300" fill="none" stroke="#54b11f" stroke-width="1"/><circle cx="732.200" cy="318" r="1.300" fill="none" stroke="#54b11f" stroke-width="1"/>
<circle cx="830" cy="315.700" r="7.500" fill="#fff" stroke="#e4e4dc" stroke-width="1"/><path d="M825.500 314.500h9l-1.200 4.500h-6.600z" fill="#54b11f"/><path d="M825 314h10M830.500 310l-1 4" stroke="#54b11f" stroke-width="1.200"/>
<circle cx="1020.500" cy="321" r="8" fill="#fff" stroke="#e4e4dc" stroke-width="1"/><path d="M1020.500 317l4 4-4 4-4-4z" fill="#f58233"/>
<circle cx="1290" cy="276" r="7.500" fill="#fff" stroke="#e4e4dc" stroke-width="1"/><path d="M1290 271.500v9M1285.500 276h9" stroke="#54b11f" stroke-width="2.400"/>
<circle cx="1337.500" cy="276.500" r="7.500" fill="#fff" stroke="#e4e4dc" stroke-width="1"/><path d="M1332.500 272.500h1.500l1 1h7l-1 4h-5.500z" fill="#54b11f" stroke="#54b11f" stroke-width=".8"/><circle cx="1336" cy="280.500" r="1" fill="#54b11f"/><circle cx="1340" cy="280.500" r="1" fill="#54b11f"/>
<circle cx="566" cy="465.200" r="8.300" fill="#fff" stroke="#e4e4dc" stroke-width="1"/><text x="566" y="469.600" font-family="DejaVu Sans,sans-serif" font-size="12.500" fill="#5aaeea" text-anchor="middle">♻</text>
</g>
<g font-size="12" font-weight="bold" fill="#55a226" text-anchor="middle" letter-spacing="-0.3" stroke="#fdfbee" stroke-width="2" paint-order="stroke" stroke-linejoin="round">
<text x="685" y="333">Вокс</text><text x="830.500" y="336.500">Красное&amp;белое</text>
<text x="1338" y="297.500" font-size="13">Магнит</text>
</g>
<!-- entrance dots -->
<g fill="#c6c1b3" stroke="#f3f1e6" stroke-width="1.200">
<circle cx="531.500" cy="321" r="2.600"/><circle cx="665" cy="345" r="2.600"/><circle cx="713" cy="346" r="2.600"/><circle cx="797" cy="346.500" r="2.600"/><circle cx="846" cy="348" r="2.600"/>
<circle cx="1002" cy="328.500" r="2.600"/><circle cx="991" cy="400.500" r="2.600"/>
<circle cx="387" cy="573" r="2.600"/><circle cx="429" cy="574" r="2.600"/>
<circle cx="731" cy="621.500" r="2.600"/><circle cx="767" cy="622.500" r="2.600"/><circle cx="802" cy="623.500" r="2.600"/><circle cx="841" cy="624.500" r="2.600"/><circle cx="891" cy="625.500" r="2.600"/><circle cx="930" cy="626.500" r="2.600"/><circle cx="972" cy="627.500" r="2.600"/><circle cx="1017" cy="628.500" r="2.600"/>
<circle cx="1308" cy="561" r="2.600"/><circle cx="1306" cy="596" r="2.600"/><circle cx="1305" cy="629" r="2.600"/>
<circle cx="1170" cy="691.500" r="2.600"/><circle cx="1220" cy="694" r="2.600"/>
</g>
<!-- marker -->
<path d="M1018.900 494.700C1018.500 486 1016.500 478 1008.300 473.300A15 15 0 1 1 1031.300 473.300C1023.100 478 1021.100 486 1020.700 494.700Z" fill="url(#mk)"/>
<defs><linearGradient id="mk" x1="0" y1="0" x2="0" y2="1"><stop offset="0" stop-color="#2a9bf7"/><stop offset="1" stop-color="#1a7fe6"/></linearGradient></defs>

</svg>
<!--MAPSVG_END-->
</div>

<!-- ================= MAP CONTROLS ================= -->
<div id="ctrls" class="abs" style="left:0;top:0;width:1360px;height:768px;pointer-events:none">
<!--CTRLS_START-->
<!-- panel attached buttons -->
<div class="abs" style="left:352px;top:119px;width:24px;height:40px;background:rgba(255,255,255,.93);border-radius:0 4px 4px 0;box-shadow:1px 1px 3px rgba(0,0,0,.25)"></div>
<svg class="abs" style="left:357px;top:132px" width="14" height="14" viewBox="0 0 14 14"><path d="M2.200 2.200l9.600 9.600M11.800 2.200l-9.600 9.600" stroke="#141414" stroke-width="2" fill="none"/></svg>
<div class="abs" style="left:352px;top:167px;width:24px;height:40px;background:linear-gradient(180deg,rgba(255,255,255,.93) 0,rgba(255,255,255,.93) 62%,rgba(255,255,255,.78) 68%,rgba(255,255,255,.72) 100%);border-radius:0 4px 4px 0;box-shadow:1px 1px 3px rgba(0,0,0,.2)"></div>
<svg class="abs" style="left:357px;top:180px" width="14" height="14" viewBox="0 0 14 14"><path d="M10 2l-5.500 5 5.500 5" stroke="#141414" stroke-width="2" fill="none"/></svg>
<!-- route button -->
<div class="ctl" style="left:392px;top:119px;width:40px;height:40px"></div>
<svg class="abs" style="left:400px;top:127px" width="24" height="24" viewBox="0 0 24 24"><g fill="none" stroke="#141414" stroke-width="2"><circle cx="4.700" cy="9.300" r="2.800"/><circle cx="19" cy="14.700" r="2.800"/><path d="M4.700 12.100v5.800a3.600 3.600 0 0 0 7.200 0V5.500a3.550 3.550 0 0 1 7.100 0v6.400"/></g></svg>
<!-- new year pill -->
<div class="ctl" style="left:679px;top:119px;width:211px;height:40px"></div>
<svg class="abs" style="left:692px;top:128px" width="22" height="22" viewBox="0 0 22 22"><g stroke="#1a8df5" stroke-width="1.800" fill="none" stroke-linecap="round"><path d="M11 1.500v19M2.800 6.200l16.400 9.600M19.200 6.200 2.800 15.800"/><path d="M8.500 3 11 5.500 13.500 3M8.500 19l2.500-2.500 2.500 2.500M2.500 9.500l3.300-.9-.9-3.300M19.500 12.500l-3.300.9.900 3.300M19.500 9.500l-3.300-.9.900-3.300M2.500 12.500l3.300.9-.9 3.300" stroke-width="1.500"/></g></svg>
<div class="abs" style="left:721px;top:131px;font-size:14px;line-height:17px;color:#8c8c8c;white-space:nowrap;letter-spacing:-0.05px">Новогоднее настроение</div>
<!-- transport group -->
<div class="ctl" style="left:906px;top:119px;width:216px;height:40px"></div>
<div class="abs" style="left:1074px;top:119px;width:1px;height:40px;background:#e6e6e6"></div>
<svg class="abs" style="left:906px;top:119px" width="216" height="40" viewBox="0 0 216 40"><g fill="none" stroke="#141414" stroke-width="2" stroke-linejoin="round">
<circle cx="20.200" cy="18.500" r="5.800"/><path d="M17.500 23.800V29a2.700 2.700 0 0 0 5.400 0v-5.200"/><path d="M21.200 11a3.500 3.500 0 0 1 6.500 1.800"/><path d="M27 13.300l6.800 1.900v11.300h-9"/>
<path d="M56 30V13.400a3 3 0 0 1 3-3h10.600a3 3 0 0 1 3 3V30M52.500 19h24M56 26.300h16.600M56 30h3.500M69.100 30h3.500M59.500 22.800h2.500M66.700 22.800h2.500"/>
<circle cx="104" cy="19.600" r="10"/><path d="M101.300 26V13.500h3.700a3.100 3.100 0 0 1 0 6.200h-6M99 23h6.500" stroke-width="2"/>
<path d="M144 10.400V29M139 29h10M144 10.400h-7l-3.500 4.400 3.500 4.500h7M144 14.400h7l3.500 4.400-3.500 4.500h-7"/>
</g><g fill="none" stroke="#8c8c8c" stroke-width="1.900" stroke-linejoin="round"><path d="M192 11.500l10 5.300-10 5.300-10-5.300Z"/><path d="M182 23.300l10 5 10-5"/></g></svg>
<!-- green 2 -->
<div class="abs" style="left:1138px;top:119px;width:40px;height:40px;border-radius:20px;background:#fff;border:4px solid #299400;box-shadow:0 1px 3px rgba(0,0,0,.25);font-size:21px;line-height:31px;text-align:center;color:#262626">2</div>
<!-- login -->
<div class="ctl" style="left:1194px;top:119px;width:94px;height:40px;border-radius:20px"></div>
<svg class="abs" style="left:1200px;top:126px" width="26" height="26" viewBox="0 0 26 26"><g fill="none" stroke="#141414" stroke-width="2"><path d="M6.500 5.500a10.500 10.500 0 1 1 0 15"/><path d="M1.500 13h14M11.500 8.500 16 13l-4.500 4.500"/></g></svg>
<div class="abs" style="left:1234px;top:130px;font-size:14px;line-height:17px;font-weight:bold;color:#262626;letter-spacing:-0.4px">Войти</div>
<!-- menu -->
<div class="ctl" style="left:1304px;top:119px;width:40px;height:40px;border-radius:20px"></div>
<svg class="abs" style="left:1314px;top:129px" width="20" height="20" viewBox="0 0 20 20"><path d="M2 4h16M2 10h16M2 16h16" stroke="#141414" stroke-width="2"/></svg>
<!-- right column -->
<div class="ctl" style="left:1308px;top:306px;width:32px;height:32px"></div>
<svg class="abs" style="left:1312px;top:310px" width="24" height="24" viewBox="0 0 24 24"><g fill="none" stroke="#141414" stroke-width="2.300" stroke-linejoin="round"><path d="M3 14.300 16.300 3.800 21.300 10.300 8 20.800Z"/><path d="M8 10.500l1.900 2.500M11.300 7.900l1.900 2.500M14.600 5.300l1.900 2.500" stroke-width="1.700"/></g></svg>
<div class="ctl" style="left:1308px;top:358px;width:32px;height:32px"></div>
<svg class="abs" style="left:1312px;top:362px" width="24" height="24" viewBox="0 0 24 24"><path d="M21 3.500 3 11l8.500 2L14 21.500Z" fill="none" stroke="#141414" stroke-width="2" stroke-linejoin="round"/></svg>
<div class="ctl" style="left:1308px;top:406px;width:32px;height:64px"></div>
<div class="abs" style="left:1308px;top:438px;width:32px;height:1px;background:#ececec"></div>
<svg class="abs" style="left:1308px;top:406px" width="32" height="64" viewBox="0 0 32 64"><path d="M16 8v16M8 16h16M8 48h16" stroke="#141414" stroke-width="2" fill="none"/></svg>
<!-- 3D compass -->
<div class="abs" style="left:1298px;top:489px;width:52px;height:52px;border-radius:26px;background:#fff;box-shadow:0 1px 3px rgba(0,0,0,.25)"></div>
<div class="abs" style="left:1308px;top:499px;width:32px;height:32px;border-radius:16px;background:#fff;border:1px solid #e0e0e0;box-shadow:0 1px 2px rgba(0,0,0,.15);font-size:14px;font-weight:bold;line-height:30px;text-align:center;color:#141414;letter-spacing:-0.3px">3D</div>
<svg class="abs" style="left:1298px;top:489px" width="52" height="52" viewBox="0 0 52 52"><path d="M26 2.500 29.500 8h-7Z" fill="#e9311a"/><path d="M26 49.500 29.500 44h-7Z" fill="#141414"/><circle cx="5" cy="26" r="1.500" fill="#e0e0e0"/><circle cx="47" cy="26" r="1.500" fill="#e0e0e0"/></svg>
<!-- share / print -->
<div class="ctl" style="left:1308px;top:592px;width:32px;height:64px"></div>
<div class="abs" style="left:1308px;top:623px;width:32px;height:1px;background:#ececec"></div>
<svg class="abs" style="left:1308px;top:592px" width="32" height="64" viewBox="0 0 32 64"><g fill="none" stroke="#141414" stroke-width="2"><circle cx="9" cy="16" r="3"/><circle cx="22" cy="8.500" r="3"/><circle cx="22" cy="23.500" r="3"/><path d="M11.600 14.500l7.800-4.500M11.600 17.500l7.800 4.500"/><path d="M10.500 44.500V39H22v5.500M10.500 53H7v-6.500a2 2 0 0 1 2-2h14.500a2 2 0 0 1 2 2V53H22"/><rect x="10.500" y="49.500" width="11.500" height="7.500"/></g></svg>
<!-- logo + licence -->
<div class="abs" style="left:1242px;top:682px;font-size:15px;line-height:17px;font-weight:bold;color:#1a1a1a;letter-spacing:-0.2px;transform:scaleX(1.180);transform-origin:left">2ГИС</div>
<div class="abs" style="left:1026px;top:700px;font-size:9.500px;line-height:11px;color:#333;white-space:nowrap;letter-spacing:-0.05px;text-shadow:0 0 2px #fff">Лицензионное соглашение, политика конфиденциальности</div>
<div class="abs" style="left:1304px;top:671px;width:40px;height:40px;border-radius:20px;background:#1c1c1c"></div>
<svg class="abs" style="left:1312px;top:679px" width="24" height="24" viewBox="0 0 24 24"><path d="M12 3a9 9 0 1 1-4.500 16.800L3 21.500l1.600-4.300A9 9 0 0 1 12 3Z" fill="none" stroke="#fff" stroke-width="2.200" stroke-linejoin="round"/></svg>

<!--CTRLS_END-->
</div>

<!-- ================= LEFT PANEL ================= -->
<div id="panel" class="abs">
<div id="ghead" class="abs"></div>
<div id="search" class="abs"></div>
<!-- ornament -->
<svg class="abs" style="left:24px;top:22.500px" width="24" height="30" viewBox="0 0 24 30"><circle cx="12" cy="4.200" r="1.900" fill="none" stroke="#f7a81c" stroke-width="1.400"/><rect x="9.500" y="5.800" width="5" height="2.700" rx=".8" fill="#f7a81c"/><circle cx="12" cy="18" r="10.400" fill="#ee1c1c"/><path d="M2.700 13.500h18.600M2.700 24.300h18.600" stroke="#cfe9ee" stroke-width="1.500"/><path d="M1.700 16.500 3.500 15l2.100 1.800L7.700 15l2.100 1.800L12 15l2.200 1.800 2.100-1.800 2.100 1.800 2.100-1.800 1.800 1.500v3.300l-1.800 1.500-2.100-1.800-2.100 1.800-2.200-1.800-2.200 1.800-2.100-1.800-2.100 1.800-2.100-1.800-1.800-1.500Z" fill="#ffd23c"/></svg>
<div class="abs" style="left:72px;top:30px;font-size:14px;line-height:17px;color:#262626;letter-spacing:-0.15px;white-space:nowrap">Северная 24-я, 204</div>
<svg class="abs" style="left:312px;top:31px" width="16" height="16" viewBox="0 0 16 16"><circle cx="8" cy="8" r="8" fill="#8c8c8c"/><path d="M5.200 5.200l5.600 5.600M10.800 5.200l-5.600 5.600" stroke="#fff" stroke-width="1.300"/></svg>
<!-- actions -->
<svg class="abs" style="left:24px;top:83px" width="240" height="24" viewBox="0 0 240 24"><g fill="none" stroke="#fff" stroke-width="2" stroke-linejoin="round"><path d="M3 3h17v18l-8.500-5.500L3 21Z" stroke-linejoin="miter"/><circle cx="107" cy="12" r="3"/><circle cx="120" cy="4.500" r="3"/><circle cx="120" cy="19.500" r="3"/><path d="M109.600 10.500l7.800-4.500M109.600 13.500l7.800 4.500"/><circle cx="208" cy="9.100" r="2.600"/><circle cx="222.100" cy="14.800" r="2.600"/><path d="M208 11.700V17a3.600 3.600 0 0 0 7.200 0V6a3.450 3.450 0 0 1 6.900 0v6.200"/></g></svg>
<div class="abs act" style="left:56px;top:87px">Сохранить</div>
<div class="abs act" style="left:158px;top:87px">Отправить</div>
<div class="abs act" style="left:258px;top:87px">Проехать</div>
<div class="abs" style="left:24px;top:134px;font-size:18px;line-height:22px;font-weight:bold;color:#fff;letter-spacing:0">Гараж</div>
<div class="abs" style="left:24px;top:158px;font-size:14px;line-height:17px;color:rgba(255,255,255,.75);letter-spacing:-0.1px;white-space:nowrap">Центральный округ, Омск • 644052</div>
<!-- tabs -->
<div id="tabs" class="abs"></div>
<div class="abs" style="left:24px;top:214.5px;font-size:13.5px;line-height:18px;color:#8c8c8c;letter-spacing:-0.3px">Инфо</div>
<div class="abs" style="left:79px;top:214.5px;font-size:13.5px;line-height:18px;color:#262626;letter-spacing:-0.05px">Отзывы</div>
<div class="abs" style="left:24px;top:244px;width:39px;height:3px;background:#299400"></div>
<!-- photo -->
<div class="abs" style="left:264px;top:247px;width:88px;height:88px;background:#1a8df5"></div>
<svg class="abs" style="left:296px;top:279px" width="24" height="24" viewBox="0 0 24 24"><path d="M8 5.500 9.500 2.500h5L16 5.500h3.500a2 2 0 0 1 2 2V19a2 2 0 0 1-2 2h-15a2 2 0 0 1-2-2V7.500a2 2 0 0 1 2-2Z" fill="none" stroke="#fff" stroke-width="2" stroke-linejoin="round"/><path d="M12 9.500v7M8.500 13h7" stroke="#fff" stroke-width="2"/></svg>
<div class="abs" style="left:24px;top:270px;font-size:14px;line-height:17px;color:#0a6fc9;letter-spacing:-0.35px;white-space:nowrap">Добавьте сюда фотографий!</div>
<div class="abs" style="left:24px;top:291px;font-size:11.500px;line-height:12px;color:#262626;letter-spacing:-0.03px;width:210px">Людям нравится, когда есть на что посмотреть</div>
<div class="abs" style="left:0;top:334px;width:264px;height:1px;background:#e0e0e0"></div>
<!-- info -->
<div class="abs" style="left:24px;top:355.5px;font-size:13px;line-height:16px;color:#262626;letter-spacing:-0.2px">1 этаж</div>
<div class="abs" style="left:24px;top:375px;width:131px;height:24px;border-radius:3px;background:#299400;color:#fff;font-size:14px;font-weight:bold;line-height:23px;text-align:center;letter-spacing:-0.55px;white-space:nowrap">Показать на карте</div>
<div class="abs" style="left:163px;top:375px;width:98px;height:24px;border-radius:3px;background:#fff;border:1px solid #e0e0e0;color:#0a6fc9;font-size:14px;line-height:21px;text-align:center;letter-spacing:-0.2px;white-space:nowrap">Рассмотреть</div>
<div class="abs" style="left:24px;top:410px;font-size:14px;line-height:17px;color:#8c8c8c;letter-spacing:-0.3px;white-space:nowrap">Материал стен</div>
<div class="abs" style="left:121px;top:421px;width:69px;height:0;border-top:1px dotted #9a9a9a"></div>
<div class="abs" style="left:192px;top:410px;font-size:14px;line-height:17px;color:#262626;letter-spacing:-0.35px">Металл</div>
<div class="abs" style="left:24px;top:450px;font-size:14px;line-height:18px;font-weight:bold;color:#141414;letter-spacing:-0.25px">Рядом</div>
<div class="abs" style="left:24px;top:478px;width:304px;height:1px;background:#e0e0e0"></div>
<!-- nearby circles -->
<svg class="abs" style="left:20px;top:491px" width="312" height="72" viewBox="0 0 312 72">
<g fill="#fff" stroke="#e6e6e6" stroke-width="1"><circle cx="36" cy="36" r="32"/><circle cx="116" cy="36" r="32"/><circle cx="196" cy="36" r="32"/><circle cx="276" cy="36" r="32"/></g>
<g fill="none" stroke="#ff8a00" stroke-width="1.800" stroke-linecap="round" stroke-linejoin="round"><path d="M23.700 20.800V28.500c0 3 1.900 4.200 2.500 5.800L25.500 48.300a2.900 2.900 0 0 0 5.800 0L30.600 34.300c.6-1.600 2.500-2.800 2.500-5.800V20.800"/><path d="M26.800 20.800v7.200M30 20.800v7.200" stroke-linecap="butt"/><ellipse cx="42.600" cy="27.300" rx="5.500" ry="6.900"/><path d="M40.500 33.800 39.800 48.300a2.800 2.800 0 0 0 5.600 0L44.700 33.800"/></g>
<g fill="none" stroke="#e00f0f" stroke-width="1.900" stroke-linecap="round"><path d="M128.300 31.800A6 6 0 1 0 121.300 22.200L103.300 39.700A6 6 0 0 0 110.500 49.200"/><path d="M110.700 30.200 115 34.500"/><path d="M108.400 40.200A5 5 0 0 0 104.800 44.800"/><circle cx="123.400" cy="43.100" r="7.600"/><path d="M115.800 43.100H131"/></g>
<g fill="none" stroke="#3fae0f" stroke-width="1.900" stroke-linecap="butt" stroke-linejoin="round"><path d="M193.600 31.900H183V37.200H209V31.900H201.300"/><path d="M185.500 37.200 187.800 47a3 3 0 0 0 2.900 2.300H201.300a3 3 0 0 0 2.900-2.300L206.500 37.200"/><path d="M199.800 22.500 196.600 35.500" stroke-linecap="round"/><path d="M191.300 42.800H200.700"/></g>
<g fill="none" stroke="#1f8fff" stroke-width="1.900" stroke-linecap="round" stroke-linejoin="round"><path d="M267.200 24.300Q276 19.700 284.800 24.300M276 20.200V22"/><path d="M270.500 27l-.5 2.300M276 27v2.300M281.500 27l.5 2.300"/><path d="M265.400 39.600 268 34.500a2.500 2.500 0 0 1 2.300-1.400h11.400a2.500 2.500 0 0 1 2.300 1.400L286.600 39.600a2.500 2.500 0 0 1 1.200 2.200V50.500h-5.500v-1.800h-12.600v1.800H264.200V41.800a2.500 2.500 0 0 1 1.200-2.200Z"/><path d="M269.500 39.600H282.500M268 44h3.500M280.500 44h3.500"/></g>
</svg>
<div class="abs lbl" style="left:16px;top:563px;width:80px">Поесть</div>
<div class="abs lbl" style="left:96px;top:563px;width:80px">Аптеки</div>
<div class="abs lbl" style="left:176px;top:563px;width:80px">Продукты</div>
<div class="abs lbl" style="left:256px;top:563px;width:80px">Автомойки</div>

</div>

<!-- ================= BROWSER CHROME ================= -->
<div id="frame" class="abs"></div>
<!-- tabs -->
<div class="tab abs" style="left:8px;width:226px"><svg class="fav" viewBox="0 0 16 16"><rect x="0" y="2.5" width="16" height="11.5" fill="#ffcc33"/><path d="M0 14 L8 8 L16 14Z" fill="#ffd84a"/><path d="M0 2.5h16L8 10.5Z" fill="#ff3333"/></svg><div class="t">10 · Входящие — Яндекс Почта</div><div class="fade" style="left:176px;background:linear-gradient(90deg,rgba(222,225,230,0),#dee1e6 80%)"></div><svg class="x" viewBox="0 0 16 16"><path d="M4 4l8 8M12 4l-8 8" stroke="#3c4043" stroke-width="1.6" fill="none"/></svg></div>
<div class="tab abs" style="left:234px;width:225px;background:radial-gradient(circle at 60% 40%,#f3f4f7 0,#eceef2 70%)"><svg class="fav" viewBox="0 0 16 16"><path d="M8 1.2 14.6 6.2V14.6H1.4V6.2Z" fill="none" stroke="#2aa35a" stroke-width="2.6" stroke-linejoin="round"/><path d="M10 10.5h5v4.5h-5z" fill="#ffc933"/><path d="M1.4 11v3.6h6" stroke="#16877a" stroke-width="2.6" fill="none"/></svg><div class="t">Продайте или сдайте в аренду</div><div class="fade" style="left:176px;background:linear-gradient(90deg,rgba(236,238,242,0),#eceef2 80%)"></div><svg class="x" viewBox="0 0 16 16"><path d="M4 4l8 8M12 4l-8 8" stroke="#3c4043" stroke-width="1.6" fill="none"/></svg></div>
<div class="tab abs" style="left:459px;width:224px"><svg class="fav" viewBox="0 0 16 16"><path d="M1 14 6 3.2 10 9.5 11.5 3h3.3L15 14h-3.6L8.6 9.6 6.6 14Z" fill="#0468ff"/></svg><div class="t">Личный кабинет - ЦИАН</div><svg class="x" viewBox="0 0 16 16"><path d="M4 4l8 8M12 4l-8 8" stroke="#3c4043" stroke-width="1.6" fill="none"/></svg></div>
<div class="tab abs" style="left:682px;width:225px"><svg class="fav" viewBox="0 0 16 16"><circle cx="5.6" cy="10.4" r="4.9" fill="#04e061"/><circle cx="11.3" cy="4.3" r="3.8" fill="#00aaff"/><circle cx="4" cy="3.4" r="2.2" fill="#965eeb"/><circle cx="13" cy="11.8" r="2.9" fill="#ff4053"/></svg><div class="t">Личный кабинет - Авито</div><svg class="x" viewBox="0 0 16 16"><path d="M4 4l8 8M12 4l-8 8" stroke="#3c4043" stroke-width="1.6" fill="none"/></svg></div>
<div class="abs" style="left:682px;top:9px;width:1px;height:17px;background:#80868b"></div>
<svg class="abs" style="left:898px;top:0" width="246" height="34" viewBox="0 0 246 34"><path d="M0 34C6 34 8 31 8 26V8C8 3 11 0 16 0H225C230 0 233 3 233 8V26C233 31 235 34 241 34Z" fill="#fff"/></svg><svg class="abs" style="left:0;top:24px" width="10" height="10" viewBox="0 0 10 10"><path d="M0 10C6 10 8 7 8 2V10Z" fill="#dee1e6"/></svg>
<div class="tab act abs" style="left:906px;width:225px;background:transparent"><svg class="fav" viewBox="0 0 16 16"><defs><clipPath id="gf"><rect x="0.3" y="0.3" width="15.400" height="15.400" rx="3.200"/></clipPath></defs><g clip-path="url(#gf)"><rect width="16" height="16" fill="#19a52d"/><path d="M0 0h16v3.800C10 2.600 5 3.600 0 5.600Z" fill="#ffb400"/><path d="M0 13.200c5-1.200 10-1.500 16-1V16H0Z" fill="#86d813"/><path d="M0 12.300c5-1.200 10-1.600 16-1.100v1c-6-.5-11-.2-16 1Z" fill="#fff"/><circle cx="8" cy="6.300" r="3.300" fill="#1a73ff"/><path d="M7 9h2v3.200H7Z" fill="#1a73ff"/></g></svg><div class="t" style="color:#202124">Гараж — 2ГИС</div><svg class="x" viewBox="0 0 16 16"><path d="M4 4l8 8M12 4l-8 8" stroke="#3c4043" stroke-width="1.6" fill="none"/></svg></div>
<!-- new tab + dropdown -->
<div class="abs" style="left:1139px;top:3px;width:28px;height:28px;border-radius:14px;background:#dee1e6"></div>
<svg class="abs" style="left:1139px;top:3px" width="28" height="28" viewBox="0 0 28 28"><path d="M14 8v12M8 14h12" stroke="#202124" stroke-width="2" fill="none"/></svg>
<div class="abs" style="left:1217px;top:3px;width:28px;height:28px;border-radius:14px;background:#dee1e6"></div>
<svg class="abs" style="left:1217px;top:3px" width="28" height="28" viewBox="0 0 28 28"><path d="M9.5 12l4.5 4.5 4.5-4.5" stroke="#202124" stroke-width="1.8" fill="none"/></svg>
<!-- window controls -->
<div class="abs" style="left:1254px;top:0;width:103px;height:18px;border:1px solid #1b2b4d;border-top:none;border-radius:0 0 5px 5px;overflow:hidden;box-shadow:0 0 0 1px rgba(255,255,255,.55)">
 <div class="abs" style="left:0;top:0;width:27px;height:17px;background:linear-gradient(180deg,#b6c3d9 0,#a2b3cf 45%,#4a6a9c 50%,#6c8ab6 100%);border-right:1px solid #2a3d63"></div>
 <div class="abs" style="left:28px;top:0;width:26px;height:17px;background:linear-gradient(180deg,#b6c3d9 0,#a2b3cf 45%,#4a6a9c 50%,#6c8ab6 100%);border-right:1px solid #2a3d63"></div>
 <div class="abs" style="left:55px;top:0;width:47px;height:17px;background:linear-gradient(180deg,#e6aaa1 0,#d98578 45%,#b7311b 50%,#d2705e 100%)"></div>
 <svg class="abs" style="left:0;top:0" width="101" height="17" viewBox="0 0 101 17"><rect x="9.400" y="8.400" width="11" height="4" rx=".8" fill="#fff" stroke="#3b3f52" stroke-width=".9"/><rect x="38.300" y="3.300" width="7.500" height="6.600" fill="none" stroke="#3b3f52" stroke-width="3.200"/><rect x="38.300" y="3.300" width="7.500" height="6.600" fill="none" stroke="#fff" stroke-width="1.900"/><rect x="36.500" y="5.500" width="6.700" height="6.600" fill="#6f89b3" stroke="#3b3f52" stroke-width="3.200"/><rect x="36.500" y="5.500" width="6.700" height="6.600" fill="#6681ad" stroke="#fff" stroke-width="1.900"/><path d="M75.500 4l7.700 7.400M83.200 4l-7.700 7.400" stroke="#53201a" stroke-width="4.300" fill="none" stroke-linecap="square"/><path d="M75.500 4l7.700 7.400M83.200 4l-7.700 7.400" stroke="#fff" stroke-width="2.900" fill="none" stroke-linecap="square"/></svg>
</div>

<div id="toolbar" class="abs"></div>
<div id="omni" class="abs"></div>
<!-- toolbar icons -->
<svg class="abs" style="left:10.800px;top:42px" width="100" height="20" viewBox="0 0 100 20"><path d="M18 10H5M10.5 4.2 4.7 10l5.8 5.8" stroke="#5f6368" stroke-width="1.9" fill="none"/><path d="M34 10h13M41.5 4.2 47.3 10l-5.8 5.8" stroke="#bdc1c6" stroke-width="1.9" fill="none"/><path d="M80.5 6.2A6.2 6.2 0 1 0 82 10" stroke="#5f6368" stroke-width="1.9" fill="none"/><path d="M82.3 3v5.3H77Z" fill="#5f6368"/></svg>
<svg class="abs" style="left:120.800px;top:45.800px" width="10.500" height="12.300" viewBox="0 0 12 14"><rect x="1.2" y="5.6" width="9.6" height="7.6" rx="1.2" fill="#5f6368"/><path d="M3.4 6V4a2.6 2.6 0 0 1 5.2 0v2" stroke="#5f6368" stroke-width="1.5" fill="none"/></svg>
<div id="url" class="abs" style="letter-spacing:-0.21px"><b>2gis.ru</b>/omsk/geo/282110631941778/73.396752%2C55.022374?m=73.395841%2C55.022628%2F17.95</div>
<svg class="abs" style="left:1192px;top:42px;overflow:visible" width="160" height="20" viewBox="0 0 160 20"><path d="M5.500 6.500H3.300v10h11.200v-3.800" stroke="#5f6368" stroke-width="1.400" fill="none"/><path d="M6.200 13C6.700 9.300 9.300 7.600 12.300 7.600V4.800l5 4.400-5 4.400v-2.800C9.800 10.800 7.800 11.400 6.200 13Z" stroke="#5f6368" stroke-width="1.300" fill="none" stroke-linejoin="round"/><path d="M42.200 4.200l1.900 4.300 4.700.4-3.600 3.100 1.100 4.600-4.100-2.500-4.100 2.500 1.100-4.600-3.600-3.100 4.700-.4Z" stroke="#5f6368" stroke-width="1.500" fill="none" stroke-linejoin="round"/><rect x="76" y="4.200" width="11.800" height="11.500" stroke="#5f6368" stroke-width="2" fill="none"/><rect x="84" y="4.200" width="3.800" height="11.500" fill="#5f6368"/><circle cx="114" cy="10" r="11" fill="#dee1e6"/><circle cx="114" cy="6.700" r="3.100" fill="#4a5568"/><path d="M108 16c0-3.300 3-4.600 6-4.600s6 1.300 6 4.600Z" fill="#4a5568"/><circle cx="146.300" cy="5.200" r="1.600" fill="#5f6368"/><circle cx="146.300" cy="10.200" r="1.600" fill="#5f6368"/><circle cx="146.300" cy="15.300" r="1.600" fill="#5f6368"/></svg>

<div id="bm" class="abs">
<svg class="abs" style="left:14px;top:6px" width="17" height="16" viewBox="0 0 17 16"><path d="M1.200 .5h9.300l5.300 7.500-5.300 7.500H1.200a.7.700 0 0 1-.7-.7V1.200a.7.700 0 0 1 .7-.7Z" fill="#ececec" stroke="#c4c4c4" stroke-width=".8"/><text x="2.600" y="12.300" font-family="Liberation Serif,serif" font-size="12.500" font-weight="bold" fill="#e52620">Я</text></svg>
<span style="left:38px">Яндекс</span>
<svg class="abs" style="left:93px;top:7px" width="16" height="16" viewBox="0 0 16 16"><rect x="0" y="2.5" width="16" height="11.500" fill="#ffcc33"/><path d="M0 14 L8 8 L16 14Z" fill="#ffd84a"/><path d="M0 2.500h16L8 10.500Z" fill="#ff3333"/></svg>
<span style="left:117px;letter-spacing:-0.15px">568 · Входящие —...</span>
<svg class="abs" style="left:241px;top:7px" width="16" height="16" viewBox="0 0 16 16"><defs><clipPath id="gf2"><rect x="0.300" y="0.300" width="15.400" height="15.400" rx="3.200"/></clipPath></defs><g clip-path="url(#gf2)"><rect width="16" height="16" fill="#19a52d"/><path d="M0 0h16v3.800C10 2.600 5 3.600 0 5.600Z" fill="#ffb400"/><path d="M0 13.200c5-1.200 10-1.500 16-1V16H0Z" fill="#86d813"/><path d="M0 12.300c5-1.200 10-1.600 16-1.100v1c-6-.5-11-.2-16 1Z" fill="#fff"/><circle cx="8" cy="6.300" r="3.300" fill="#1a73ff"/><path d="M7 9h2v3.200H7Z" fill="#1a73ff"/></g></svg>
<span style="left:265px;letter-spacing:-0.15px">Карта Омска: улиц...</span>
<div class="fold" style="left:393px"></div><span style="left:415px">сайты</span>
<div class="fold" style="left:466px"></div><span style="left:488px">проверка докумен...</span>
<div class="fold" style="left:618px"></div><span style="left:640px">отчетность</span>
<div class="fold" style="left:721px"></div><span style="left:744px">администрации</span>
<div class="fold" style="left:851px"></div><span style="left:874px">залоговаЯ недвиж...</span>
<svg class="abs" style="left:1000px;top:7px" width="17" height="16" viewBox="0 0 17 16"><path d="M8.500 15 1.500 8.500C-1 5.500 1 1.500 4.500 1.500 6.500 1.500 8 3 8.500 4 9 3 10.500 1.500 12.500 1.500 16 1.500 18 5.500 15.500 8.500Z" fill="#e02020"/><path d="M3 8l3-2 2.500 2.500L11 6l3 2" stroke="#fff" stroke-width="1.200" fill="none"/></svg>
<span style="left:1024px;letter-spacing:-0.2px">Конвертация JPG в...</span>
<span style="left:1204px;font-size:13px;top:6px;color:#5f6368">»</span>
<div class="abs" style="left:1223px;top:7px;width:1px;height:16px;background:#dadce0"></div>
<div class="fold" style="left:1236px"></div><span style="left:1258px">Другие закладки</span>

</div>

<!-- ================= TASKBAR ================= -->
<div id="task" class="abs">
<!--TASK_START-->
<div class="abs" style="left:0;top:0;width:1360px;height:1px;background:rgba(160,185,230,.55)"></div>
<!-- start orb -->
<div class="abs" style="left:8px;top:2px;width:36px;height:36px;border-radius:18px;background:radial-gradient(circle at 50% 35%,#6fa8e8 0,#2a62b8 45%,#123a80 75%,#0a2350 100%);box-shadow:0 0 0 1px rgba(150,180,230,.6),0 0 4px rgba(0,0,0,.6)"></div>
<svg class="abs" style="left:13px;top:8px" width="26" height="24" viewBox="0 0 26 24"><path d="M3 5.500c3-1.800 6-2 9-.3L10.500 11c-3-1.600-5.800-1.400-8.800.3Z" fill="#f0562a"/><path d="M13.500 5.800c3 1.700 6 1.500 9-.3L21 11.500c-3 1.700-6 1.800-9 .2Z" fill="#8cc63f"/><path d="M1.300 12.800c3-1.700 5.800-1.900 8.800-.3L8.600 18.300c-3-1.600-5.800-1.400-8.800.3Z" fill="#2ea0e8"/><path d="M11.600 13.200c3 1.600 6 1.500 9-.2l-1.500 5.800c-3 1.700-6 1.800-9 .2Z" fill="#fcc20e"/></svg>
<!-- word -->
<div class="tbtn" style="left:60px;width:58px"></div>
<svg class="abs" style="left:72px;top:5px" width="34" height="32" viewBox="0 0 34 32"><path d="M8 1.500 30 4v25L8 30.500Z" fill="#fff" stroke="#b8c4dc" stroke-width=".8"/><path d="M2 4.500 20 2v28L2 27.500Z" fill="#2f5fb3"/><path d="M2 4.500 20 2v28L2 27.500Z" fill="url(#wg)"/><text x="12" y="15" font-family="Liberation Serif,serif" font-size="13" font-weight="bold" font-style="italic" fill="#2a4f9c">W</text><g stroke="#2f5fb3" stroke-width="1.600"><path d="M21.500 9.500h6M21.500 13h6M11 18h16.500M11 21.500h16.500M11 25h16.500"/></g><defs><linearGradient id="wg" x1="0" y1="0" x2="1" y2="0"><stop offset="0" stop-color="#fff" stop-opacity=".95"/><stop offset="1" stop-color="#fff" stop-opacity=".85"/></linearGradient></defs></svg>
<!-- chrome -->
<div class="tbtn" style="left:122px;width:53px;background:linear-gradient(180deg,rgba(255,255,255,.6),rgba(255,255,255,.38) 50%,rgba(255,255,255,.28) 51%,rgba(255,255,255,.42));border-color:rgba(255,255,255,.7)"></div>
<div class="abs" style="left:176px;top:4px;width:3px;height:34px;background:rgba(255,255,255,.35);border-right:1px solid rgba(255,255,255,.5)"></div>
<svg class="abs" style="left:132px;top:4px" width="34" height="34" viewBox="0 0 34 34"><circle cx="16" cy="16" r="15" fill="#db4437"/><path d="M16 16 3 8.500A15 15 0 0 0 11 30.200Z" fill="#0f9d58"/><path d="M16 16 11 30.200A15 15 0 0 0 31 16Z" fill="#ffcd40"/><path d="M16 16H31A15 15 0 0 0 29 8.500H16Z" fill="#db4437"/><circle cx="16" cy="16" r="6.800" fill="#fff"/><circle cx="16" cy="16" r="5.300" fill="#4285f4"/><circle cx="24.500" cy="25.500" r="7" fill="#e8eaed" stroke="#9aa0a6" stroke-width=".5"/><circle cx="24.500" cy="23.300" r="2.300" fill="#5f6368"/><path d="M20 29c0-2.500 2.200-3.300 4.500-3.300s4.500.8 4.500 3.300v.5h-9Z" fill="#5f6368"/></svg>
<!-- explorer -->
<div class="tbtn" style="left:184px;width:58px"></div>
<svg class="abs" style="left:196px;top:6px" width="34" height="30" viewBox="0 0 34 30"><path d="M2 4h9l2 2.500h17V26H2Z" fill="#f3d980" stroke="#c9a84a" stroke-width=".8"/><path d="M4 2h8v3H4z" fill="#fff" stroke="#bbb" stroke-width=".5"/><rect x="5" y="2.500" width="3" height="1.500" fill="#3ab03a"/><path d="M13 4h8v3h-8z" fill="#fff" stroke="#bbb" stroke-width=".5"/><rect x="14" y="4.500" width="3" height="1.500" fill="#d33"/><path d="M20 6h8v3h-8z" fill="#fff" stroke="#bbb" stroke-width=".5"/><rect x="21" y="6.500" width="3" height="1.500" fill="#38f"/><path d="M2 10h28v16H2Z" fill="#f9e9a3" stroke="#c9a84a" stroke-width=".8"/><path d="M8 28V20c0-2 1-3 3-3h12c2 0 3 1 3 3v8h-5v-6H13v6Z" fill="#8fd0f0" stroke="#4a9ac8" stroke-width=".8"/></svg>
<!-- tray -->
<div class="abs" style="left:1119px;top:10px;font-size:12px;line-height:14px;color:#fff;letter-spacing:-0.3px">RU</div>
<svg class="abs" style="left:1145px;top:8px" width="130" height="24" viewBox="0 0 130 24"><circle cx="12.500" cy="12.500" r="7" fill="#fff"/><path d="M8.500 8.500l4 5v4.500M16.500 8.500l-4 5" stroke="#e0202a" stroke-width="2.200" fill="none"/><rect x="30" y="5" width="9" height="13" fill="#c9c9c9" stroke="#888" stroke-width=".6"/><path d="M31.500 7.500h6M31.500 10h6M31.500 12.500h6" stroke="#777" stroke-width=".8"/><rect x="37" y="13" width="6.500" height="5" fill="#2fb8a8" stroke="#ddd" stroke-width=".8"/><path d="M55 10.500h3l4-3.500v11l-4-3.500h-3Z" fill="#fff"/><path d="M64.500 9.500a4 4 0 0 1 0 6M67 7a7.500 7.500 0 0 1 0 11" stroke="#fff" stroke-width="1.200" fill="none"/><rect x="82" y="8.500" width="11" height="8" fill="#0d2a60" stroke="#fff" stroke-width="1.500"/><path d="M84.500 19.500h6M87.500 16.500v3M79.500 5v6h2.500V5M79.500 11v5h2.500" stroke="#fff" stroke-width="1.300" fill="none"/><path d="M103 5v14" stroke="#fff" stroke-width="1.500"/><path d="M104 5.500h8.500l-1.500 3.500 1.500 3.500H104Z" fill="#fff"/><circle cx="112" cy="16" r="4.300" fill="#e2231a"/><path d="M110 14l4 4M114 14l-4 4" stroke="#fff" stroke-width="1.300"/></svg>
<div class="abs" style="left:1280px;top:6px;width:55px;font-size:12px;line-height:14px;color:#fff;text-align:center;letter-spacing:-0.5px">14:26</div>
<div class="abs" style="left:1272px;top:23px;width:70px;font-size:12px;line-height:14px;color:#fff;text-align:center;letter-spacing:-0.5px">27.01.2023</div>
<div class="abs" style="left:1346px;top:2px;width:14px;height:38px;border-left:1px solid rgba(255,255,255,.35);background:linear-gradient(90deg,rgba(255,255,255,.12),rgba(255,255,255,.03))"></div>

<!--TASK_END-->
</div>

</div>
</body>
</html>
